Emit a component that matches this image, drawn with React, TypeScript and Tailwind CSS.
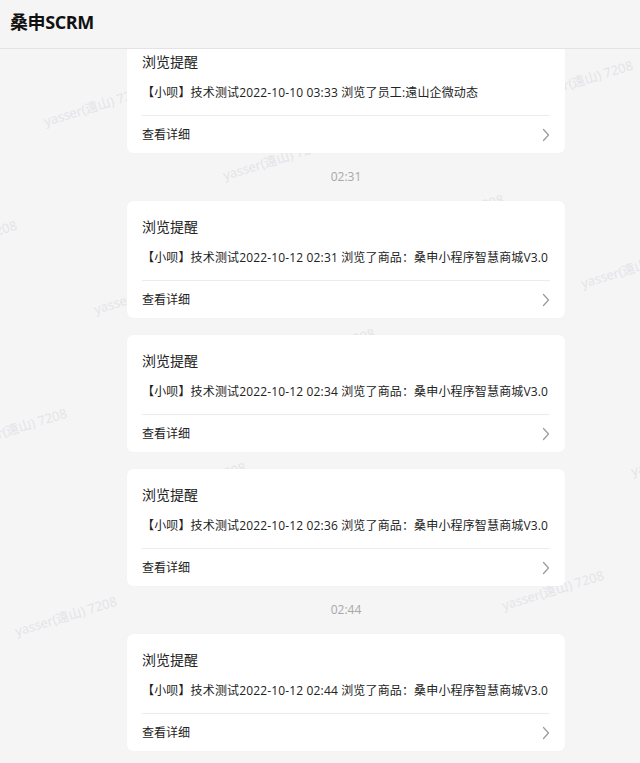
import React from 'react';

type Item =
  | { kind: 'time'; label: string }
  | { kind: 'card'; text: string };

const FEED: Item[] = [
  { kind: 'card', text: '【小呗】技术测试2022-10-10 03:33 浏览了员工:遠山企微动态' },
  { kind: 'time', label: '02:31' },
  { kind: 'card', text: '【小呗】技术测试2022-10-12 02:31 浏览了商品：桑申小程序智慧商城V3.0' },
  { kind: 'card', text: '【小呗】技术测试2022-10-12 02:34 浏览了商品：桑申小程序智慧商城V3.0' },
  { kind: 'card', text: '【小呗】技术测试2022-10-12 02:36 浏览了商品：桑申小程序智慧商城V3.0' },
  { kind: 'time', label: '02:44' },
  { kind: 'card', text: '【小呗】技术测试2022-10-12 02:44 浏览了商品：桑申小程序智慧商城V3.0' },
];

const FONT = "font-['Open_Sans','Noto_Sans_CJK_SC',sans-serif]";

// watermark lattice, measured off the screen
const marks = (() => {
  const out: { x: number; y: number }[] = [];
  for (let i = -4; i <= 6; i++) {
    for (let j = -3; j <= 6; j++) {
      const x = 47 + 179 * i + 50 * j;
      const y = 130 + 54 * i + 188 * j;
      if (x > -160 && x < 660 && y > 0 && y < 820) out.push({ x, y });
    }
  }
  return out;
})();

const Chevron = () => (
  <svg width="8" height="14" viewBox="0 0 8 14" fill="none">
    <path d="M1.5 1.5 L6.5 7 L1.5 12.5" stroke="#9a9a9a" strokeWidth="1.2" strokeLinecap="round" strokeLinejoin="round" />
  </svg>
);

const NoticeCard = ({ text }: { text: string }) => (
  <div className="bg-white rounded-md px-[15px] shadow-[0_0_1px_rgba(0,0,0,0.06)]">
    <p className="pt-[15px] text-[14px] leading-[22px] text-[#222]">浏览提醒</p>
    <p className="mt-[10px] pb-[12px] text-[12px] leading-[20px] tracking-[0.15px] text-[#222] whitespace-nowrap border-b border-[#ececec]">
      {text}
    </p>
    <div className="h-[37px] flex items-center justify-between">
      <span className="text-[12px] text-[#222]">查看详细</span>
      <Chevron />
    </div>
  </div>
);

export default function App() {
  return (
    <div className={`relative min-h-screen overflow-hidden bg-[#f5f5f5] ${FONT}`}>
      {/* watermark */}
      <div className="absolute inset-0 pointer-events-none select-none">
        {marks.map((m, idx) => (
          <span
            key={idx}
            className="absolute whitespace-nowrap text-[13px] leading-[17px] text-[#e3e3e8] origin-bottom-left -rotate-[17deg]"
            style={{ left: m.x, top: m.y - 17 }}
          >
            yasser(遠山) 7208
          </span>
        ))}
      </div>

      <header className="relative z-20 h-[49px] flex items-center pb-[3px] pl-[10px] bg-[#f5f5f5] border-b border-[#e3e3e3]">
        <h1 className="text-[18px] font-bold tracking-[-0.4px] text-[#111]">桑申SCRM</h1>
      </header>

      <main className="relative z-10 -mt-[13px] ml-[127px] w-[438px] pb-[12px]">
        {FEED.map((item, idx) => {
          if (item.kind === 'time') {
            return (
              <div key={idx} className="h-[48px] flex items-center justify-center text-[12px] text-[#a8a8a8]">
                {item.label}
              </div>
            );
          }
          const prev = FEED[idx - 1];
          return (
            <div key={idx} className={prev && prev.kind === 'card' ? 'mt-[17px]' : ''}>
              <NoticeCard text={item.text} />
            </div>
          );
        })}
      </main>
    </div>
  );
}
